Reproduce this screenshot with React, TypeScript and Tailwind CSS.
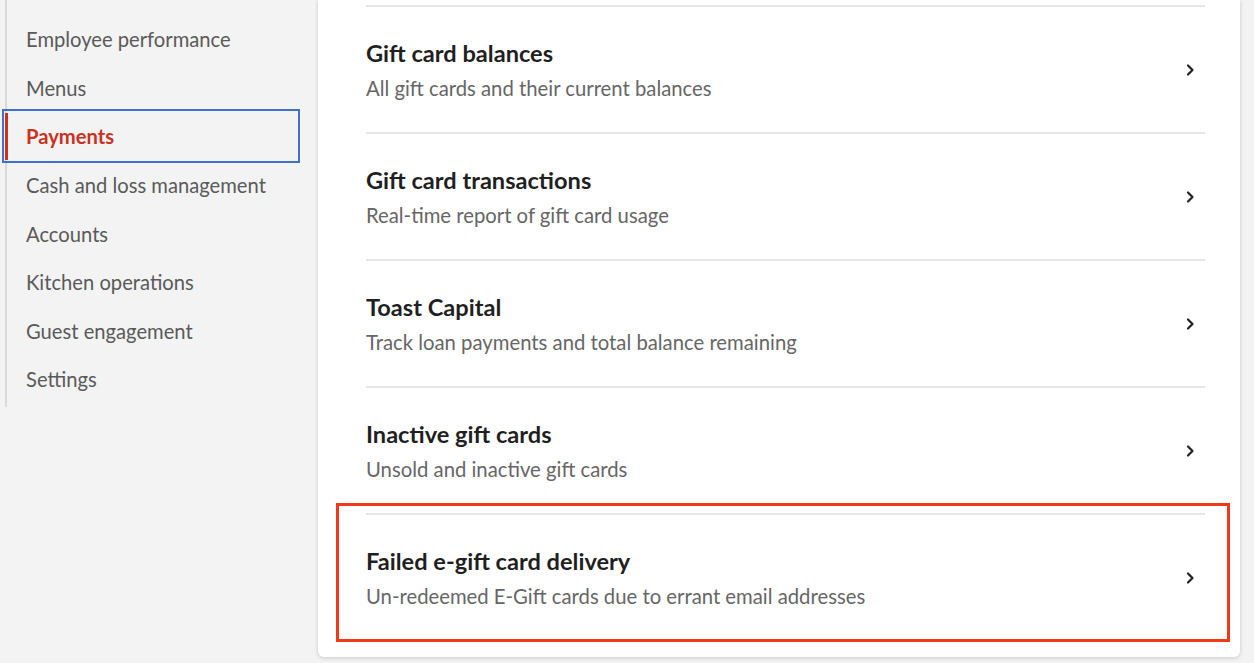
import React from 'react';

const navItems = [
  'Employee performance',
  'Menus',
  'Payments',
  'Cash and loss management',
  'Accounts',
  'Kitchen operations',
  'Guest engagement',
  'Settings',
];

const reports = [
  { title: 'Gift card balances', desc: 'All gift cards and their current balances' },
  { title: 'Gift card transactions', desc: 'Real-time report of gift card usage' },
  { title: 'Toast Capital', desc: 'Track loan payments and total balance remaining' },
  { title: 'Inactive gift cards', desc: 'Unsold and inactive gift cards' },
  { title: 'Failed e-gift card delivery', desc: 'Un-redeemed E-Gift cards due to errant email addresses' },
];

const Chevron = () => (
  <svg width="10" height="14" viewBox="0 0 10 14" className="text-[#222]">
    <path d="M3 2.5 L7.5 7 L3 11.5" fill="none" stroke="currentColor" strokeWidth="2.2" strokeLinecap="round" strokeLinejoin="round" />
  </svg>
);

export default function App() {
  return (
    <div
      className="w-[1254px] h-[663px] bg-[#f3f3f3] flex overflow-hidden relative"
      style={{ fontFamily: 'Lato, "Open Sans", sans-serif' }}
    >
      {/* Sidebar */}
      <aside className="w-[318px] shrink-0 pl-[5px]">
        <nav className="border-l-2 border-[#d9d9d9] pt-[15px] pb-[3px]">
          {navItems.map(item => {
            const active = item === 'Payments';
            return (
              <div
                key={item}
                className={`relative h-[48.6px] flex items-center pl-[19px] text-[20.2px] ${
                  active ? 'text-[#c8321e] font-bold' : 'text-[#5a5a5a]'
                }`}
              >
                {active && (
                  <>
                    <span className="absolute left-[-2px] top-[1px] bottom-[1px] w-[3px] bg-[#c8321e]" />
                    <span className="absolute left-[-5px] top-[-3px] w-[298px] h-[54px] border-2 border-[#3d72c8]" />
                  </>
                )}
                {item}
              </div>
            );
          })}
        </nav>
      </aside>

      {/* Report list card */}
      <main className="w-[922px] h-[657px] bg-white rounded-b-md shadow-[0_1px_4px_rgba(0,0,0,0.18)] pl-[48px] pr-[35px] pt-[5px]">
        {reports.map(r => (
          <div key={r.title} className="h-[127px] border-t-2 border-[#e6e6e6] flex items-center justify-between pr-[10px]">
            <div className="flex flex-col">
              <span className="text-[23.6px] font-bold text-[#1f1f1f] leading-[30px] -mt-[1px]">{r.title}</span>
              <span className="text-[20.3px] text-[#666] leading-[26px] mt-[7px]">{r.desc}</span>
            </div>
            <Chevron />
          </div>
        ))}
      </main>

      {/* Highlight overlay */}
      <div className="absolute left-[336px] top-[503px] w-[894px] h-[139px] border-[3px] border-[#f1391a] pointer-events-none" />
    </div>
  );
}
